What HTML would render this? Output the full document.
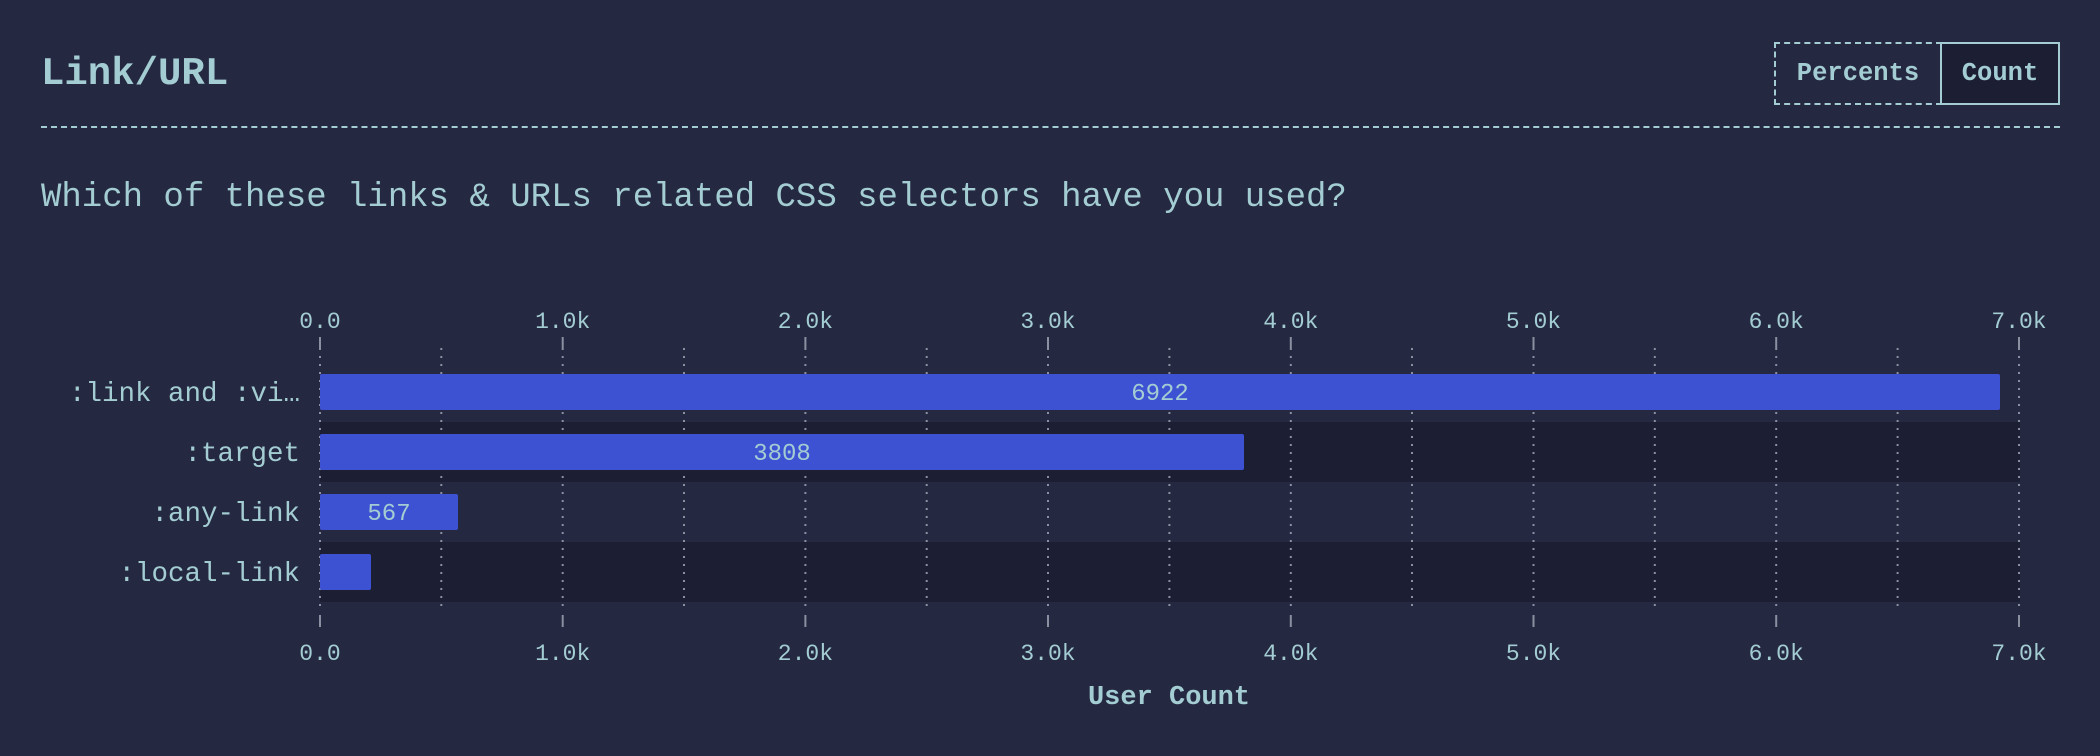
<!DOCTYPE html>
<html><head><meta charset="utf-8"><style>
html,body{margin:0;padding:0;background:#242841;}
body{width:2100px;height:756px;position:relative;overflow:hidden;font-family:"Liberation Mono",monospace;color:#a3cdd3;}
.t{position:absolute;white-space:nowrap;}
</style></head><body>
<div class="t" style="left:41px;top:50px;font-size:39px;font-weight:bold;line-height:48px;">Link/URL</div>
<div style="position:absolute;left:1774px;top:42px;width:164px;height:59px;border:2px dashed #a3cdd3;box-sizing:content-box;"></div>
<div class="t" style="left:1776px;top:44px;width:164px;height:59px;line-height:59px;text-align:center;font-size:25.5px;font-weight:bold;">Percents</div>
<div style="position:absolute;left:1940px;top:42px;width:116px;height:59px;border:2px solid #a3cdd3;background:#1c1f34;"></div>
<div class="t" style="left:1942px;top:44px;width:116px;height:59px;line-height:59px;text-align:center;font-size:25.5px;font-weight:bold;">Count</div>
<div style="position:absolute;left:41px;top:126px;width:2019px;border-top:2px dashed #a3cdd3;"></div>
<div class="t" style="left:41px;top:178px;font-size:34px;line-height:40px;">Which of these links &amp; URLs related CSS selectors have you used?</div>
<svg width="2100" height="756" style="position:absolute;left:0;top:0" font-family="Liberation Mono, monospace">
<rect x="320" y="422" width="1700" height="60" fill="#1c1f34"/>
<rect x="320" y="542" width="1700" height="60" fill="#1c1f34"/>
<g stroke="#8b8fa0" stroke-width="2" stroke-dasharray="2,6">
<line x1="320" y1="348" x2="320" y2="612"/><line x1="562.7" y1="348" x2="562.7" y2="612"/><line x1="805.4" y1="348" x2="805.4" y2="612"/><line x1="1048" y1="348" x2="1048" y2="612"/><line x1="1290.8" y1="348" x2="1290.8" y2="612"/><line x1="1533.5" y1="348" x2="1533.5" y2="612"/><line x1="1776.2" y1="348" x2="1776.2" y2="612"/><line x1="2019" y1="348" x2="2019" y2="612"/>
<line x1="441.3" y1="348" x2="441.3" y2="612"/><line x1="684" y1="348" x2="684" y2="612"/><line x1="926.7" y1="348" x2="926.7" y2="612"/><line x1="1169.4" y1="348" x2="1169.4" y2="612"/><line x1="1412" y1="348" x2="1412" y2="612"/><line x1="1654.8" y1="348" x2="1654.8" y2="612"/><line x1="1897.6" y1="348" x2="1897.6" y2="612"/>
</g>
<g stroke="#8b8fa0" stroke-width="2">
<line x1="320" y1="337" x2="320" y2="348"/><line x1="562.7" y1="337" x2="562.7" y2="348"/><line x1="805.4" y1="337" x2="805.4" y2="348"/><line x1="1048" y1="337" x2="1048" y2="348"/><line x1="1290.8" y1="337" x2="1290.8" y2="348"/><line x1="1533.5" y1="337" x2="1533.5" y2="348"/><line x1="1776.2" y1="337" x2="1776.2" y2="348"/><line x1="2019" y1="337" x2="2019" y2="348"/>
<line x1="320" y1="615" x2="320" y2="627"/><line x1="562.7" y1="615" x2="562.7" y2="627"/><line x1="805.4" y1="615" x2="805.4" y2="627"/><line x1="1048" y1="615" x2="1048" y2="627"/><line x1="1290.8" y1="615" x2="1290.8" y2="627"/><line x1="1533.5" y1="615" x2="1533.5" y2="627"/><line x1="1776.2" y1="615" x2="1776.2" y2="627"/><line x1="2019" y1="615" x2="2019" y2="627"/>
</g>
<g fill="#3d52d3">
<rect x="320" y="374" width="1680" height="36" rx="2"/>
<rect x="320" y="434" width="924" height="36" rx="2"/>
<rect x="320" y="494" width="138" height="36" rx="2"/>
<rect x="320" y="554" width="51" height="36" rx="2"/>
</g>
<g fill="#a3cdd3" font-size="23" text-anchor="middle">
<text x="320" y="328">0.0</text><text x="562.7" y="328">1.0k</text><text x="805.4" y="328">2.0k</text><text x="1048" y="328">3.0k</text><text x="1290.8" y="328">4.0k</text><text x="1533.5" y="328">5.0k</text><text x="1776.2" y="328">6.0k</text><text x="2019" y="328">7.0k</text>
<text x="320" y="660">0.0</text><text x="562.7" y="660">1.0k</text><text x="805.4" y="660">2.0k</text><text x="1048" y="660">3.0k</text><text x="1290.8" y="660">4.0k</text><text x="1533.5" y="660">5.0k</text><text x="1776.2" y="660">6.0k</text><text x="2019" y="660">7.0k</text>
<text x="1160" y="400" font-size="24">6922</text>
<text x="782" y="460" font-size="24">3808</text>
<text x="389" y="520" font-size="24">567</text>
<text x="1169" y="704" font-size="27" font-weight="bold">User Count</text>
</g>
<g fill="#a3cdd3" font-size="27.5" text-anchor="end">
<text x="300" y="401">:link and :vi…</text>
<text x="300" y="461">:target</text>
<text x="300" y="521">:any-link</text>
<text x="300" y="581">:local-link</text>
</g>
</svg>
</body></html>
